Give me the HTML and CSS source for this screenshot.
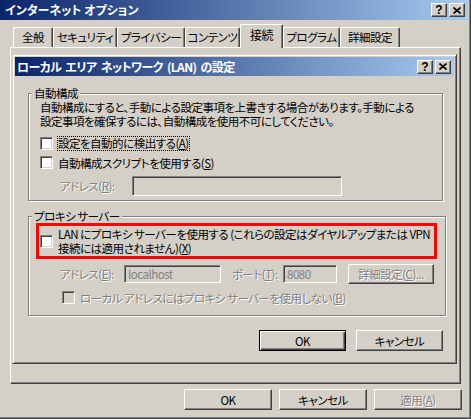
FILE: index.html
```html
<!DOCTYPE html>
<html lang="ja">
<head>
  <meta charset="UTF-8">
  <title>インターネット オプション</title>
  <link rel="stylesheet" href="styles.css">
</head>
<body>

  <div class="window">
    <div class="titlebar">
      <span class="title">インターネット オプション</span>
      <span class="cap-btn">?</span>
      <span class="cap-btn"><svg width="8" height="7" viewBox="0 0 8 7"><path d="M0.5 0.5 L7.5 6.5 M7.5 0.5 L0.5 6.5" stroke="#000" stroke-width="1.6"/></svg></span>
    </div>

    <div class="tabs">
      <span class="tab t-general">全般</span>
      <span class="tab t-security">セキュリティ</span>
      <span class="tab t-privacy">プライバシー</span>
      <span class="tab t-content">コンテンツ</span>
      <span class="tab t-conn active">接続</span>
      <span class="tab t-programs">プログラム</span>
      <span class="tab t-advanced">詳細設定</span>
    </div>

    <div class="panel">
      <div class="dialog">
        <div class="titlebar">
          <span class="title">ローカル エリア ネットワーク (LAN) の設定</span>
          <span class="cap-btn">?</span>
          <span class="cap-btn"><svg width="8" height="7" viewBox="0 0 8 7"><path d="M0.5 0.5 L7.5 6.5 M7.5 0.5 L0.5 6.5" stroke="#000" stroke-width="1.6"/></svg></span>
        </div>

        <div class="dialog-body">
          <fieldset class="group">
            <legend>自動構成</legend>
            <p class="note">自動構成にすると、手動による設定事項を上書きする場合があります。手動による<br>設定事項を確保するには、自動構成を使用不可にしてください。</p>
            <div class="check first">
              <span class="box"></span>
              <span class="focus">設定を自動的に検出する(<u>A</u>)</span>
            </div>
            <div class="check">
              <span class="box"></span>
              <span>自動構成スクリプトを使用する(<u>S</u>)</span>
            </div>
            <div class="field">
              <span class="lbl disabled">アドレス(<u>R</u>):</span>
              <span class="input script-url"></span>
            </div>
          </fieldset>

          <fieldset class="group proxy">
            <legend>プロキシ サーバー</legend>
            <div class="highlight">
              <span class="box"></span>
              <span class="two-lines">LAN にプロキシ サーバーを使用する (これらの設定はダイヤルアップまたは VPN<br>接続には適用されません)(<u>X</u>)</span>
            </div>
            <div class="field">
              <span class="lbl lbl-addr disabled">アドレス(<u>E</u>):</span>
              <span class="input addr">localhost</span>
              <span class="lbl lbl-port disabled">ポート(<u>T</u>):</span>
              <span class="input port">8080</span>
              <span class="btn small disabled">詳細設定(<u>C</u>)...</span>
            </div>
            <div class="check bypass">
              <span class="box off"></span>
              <span class="disabled">ローカル アドレスにはプロキシ サーバーを使用しない(<u>B</u>)</span>
            </div>
          </fieldset>

          <div class="actions">
            <span class="btn default">OK</span>
            <span class="btn">キャンセル</span>
          </div>
        </div>
      </div>
    </div>

    <div class="footer">
      <span class="btn wide">OK</span>
      <span class="btn wide">キャンセル</span>
      <span class="btn wide disabled">適用(<u>A</u>)</span>
    </div>
  </div>

</body>
</html>
```

FILE: styles.css
```css
body { margin:0; background:#d4d0c8; color:#000; font-family:"Noto Sans CJK JP", sans-serif; font-size:11.5px; letter-spacing:-0.5px; font-feature-settings:"palt"; }
u { text-decoration:underline; text-underline-offset:1px; }

.window { box-sizing:border-box; width:471px; height:419px; overflow:hidden; background:#d4d0c8; border-right:1px solid #404040; border-bottom:1px solid #404040; box-shadow:inset -1px -1px #808080; padding:0 2px 2px 0; }

.titlebar { display:flex; align-items:center; height:20px; padding:0 3px 0 5px; background:linear-gradient(to right, #0a246a, #a6caf0); color:#fff; font-size:12px; font-weight:bold; letter-spacing:0; }
.title { flex:1; line-height:20px; white-space:nowrap; }
.dialog .title { letter-spacing:-0.6px; word-spacing:2px; }
.cap-btn { display:flex; align-items:center; justify-content:center; width:14px; height:12px; margin-left:2px; background:#d4d0c8; border:1px solid; border-color:#fff #404040 #404040 #fff; box-shadow:inset -1px -1px #808080; color:#000; font:bold 12px "Liberation Sans", sans-serif; }

.tabs { display:flex; align-items:flex-end; height:27px; padding-left:13px; }
.tab { box-sizing:border-box; height:20px; line-height:19px; text-align:center; border-top:1px solid #fff; border-left:1px solid #fff; border-right:1px solid #404040; box-shadow:inset -1px 0 #808080; border-radius:2px 2px 0 0; white-space:nowrap; }
.tab.active { position:relative; height:24px; line-height:20px; margin-bottom:-1px; background:#d4d0c8; font-size:12px; }
.t-general { width:40px; }
.t-security { width:64px; }
.t-privacy { width:68px; }
.t-content { width:55px; }
.t-conn { width:43px; }
.t-programs { width:57px; }
.t-advanced { width:60px; }

.panel { box-sizing:border-box; width:451px; margin-left:10px; border:1px solid; border-color:#fff #404040 #404040 #fff; box-shadow:inset -1px -1px #808080; padding:6px 3px 19px 1px; }

.dialog { border:1px solid; border-color:#d4d0c8 #404040 #404040 #d4d0c8; box-shadow:inset 1px 1px #fff, inset -1px -1px #808080; padding:2px; }
.dialog .titlebar { height:19px; padding-left:2px; }
.dialog-body { padding:11px 11px 10px 13px; }

.group { margin:0; padding:1px 11px 4px; border:1px solid #808080; box-shadow:inset 1px 1px #fff, 1px 1px #fff; }
.group legend { margin-left:-8px; padding:0 2px; line-height:12px; background:#d4d0c8; }
.group.proxy { margin-top:9px; padding-bottom:9px; }

.note { margin:0; line-height:14px; white-space:nowrap; }

.check { display:flex; align-items:center; height:17px; margin-top:2px; white-space:nowrap; }
.check.first { margin-top:7px; }
.check.bypass { margin-top:5px; padding-left:22px; }
.box { flex:none; box-sizing:border-box; width:13px; height:13px; margin-right:5px; background:#fff; border:1px solid; border-color:#808080 #fff #fff #808080; box-shadow:inset 1px 1px #404040, inset -1px -1px #d4d0c8; }
.box.off { background:#d4d0c8; }
.focus { margin-left:-1px; line-height:13px; border:1px dotted #000; }

.disabled { color:#808080; text-shadow:1px 1px #fff; }

.field { display:flex; align-items:center; margin-top:5px; padding-left:20px; white-space:nowrap; }
.lbl { flex:none; width:72px; }
.lbl-addr { width:64px; }
.lbl-port { width:51px; margin-left:11px; }
.input { box-sizing:border-box; height:20px; padding:0 3px; line-height:16px; color:#808080; background:#d4d0c8; border:1px solid; border-color:#808080 #fff #fff #808080; box-shadow:inset 1px 1px #404040, inset -1px -1px #d4d0c8; }
.script-url { width:210px; }
.addr, .port { height:18px; }
.addr { width:97px; }
.port { width:54px; }

.highlight { display:flex; align-items:center; margin:0 -3px 0 -4px; padding:1px 0 1px 1px; border:3px solid #f00; }
.two-lines { line-height:14px; white-space:nowrap; }

.btn { box-sizing:border-box; display:flex; align-items:center; justify-content:center; width:87px; height:21px; background:#d4d0c8; border:1px solid; border-color:#fff #404040 #404040 #fff; box-shadow:inset -1px -1px #808080; white-space:nowrap; }
.btn.default { border-color:#000; box-shadow:inset 1px 1px #fff, inset -1px -1px #404040, inset -2px -2px #808080; }
.btn.small { width:86px; height:20px; margin-left:11px; }
.btn.wide { width:88px; }

.actions { display:flex; justify-content:flex-end; gap:10px; margin-top:14px; }
.footer { display:flex; justify-content:flex-end; gap:7px; margin-top:5px; padding-right:6px; }
```
